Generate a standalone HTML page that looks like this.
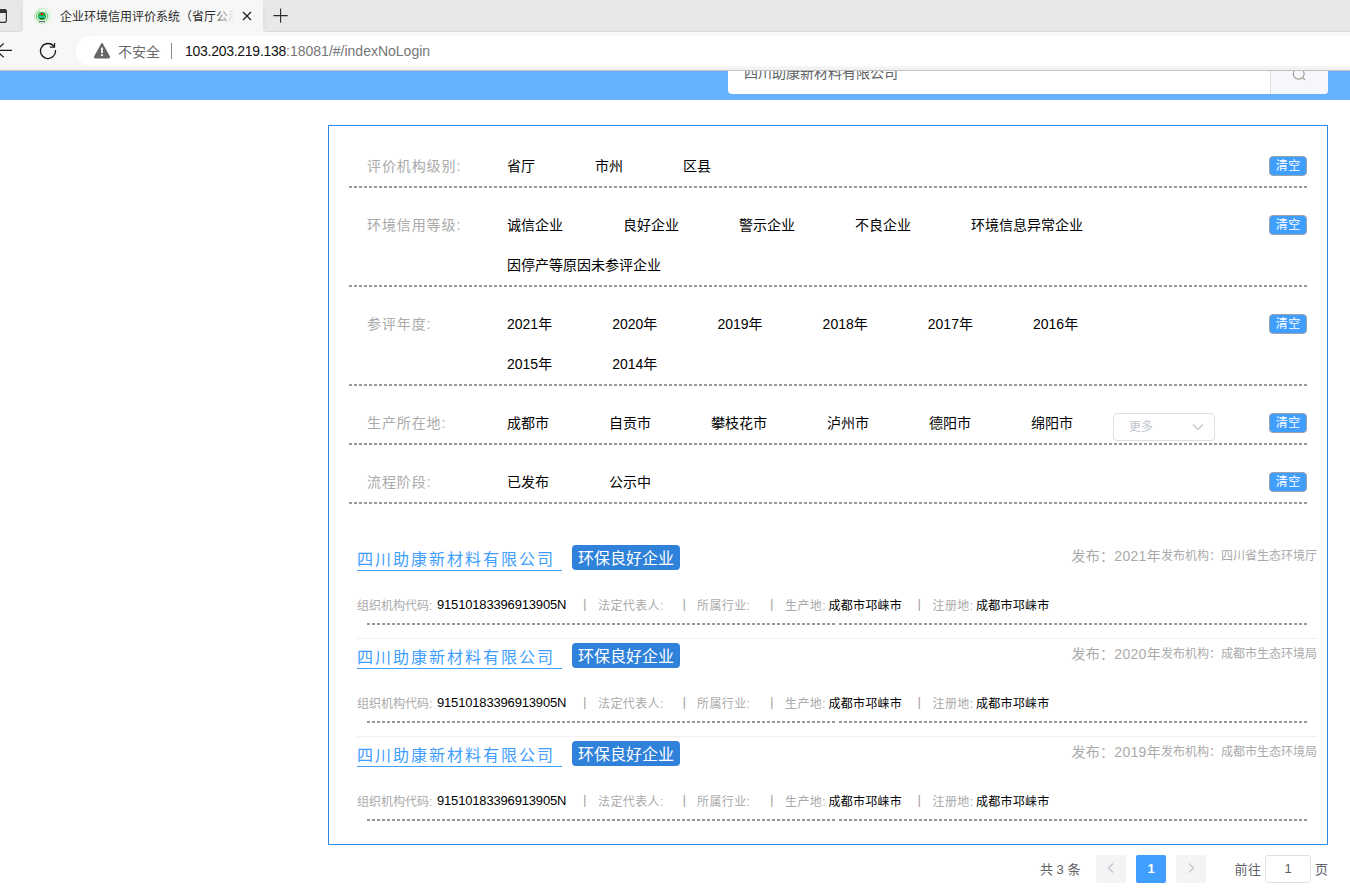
<!DOCTYPE html>
<html lang="zh-CN">
<head>
<meta charset="utf-8">
<title>企业环境信用评价系统（省厅公示）</title>
<style>
*{box-sizing:border-box;margin:0;padding:0}
html,body{width:1350px;height:895px;overflow:hidden;background:#fff}
body{position:relative;font-family:"Liberation Sans","Noto Sans CJK SC",sans-serif;font-size:14px;color:#000}
.abs{position:absolute;white-space:nowrap}
/* browser chrome */
#tabbar{left:0;top:0;width:1350px;height:32px;background:#e8e8e8}
#tab{left:22.8px;top:-3px;width:240.5px;height:36px;background:#f7f7f7;border-radius:6px 6px 0 0}
#tabbar{background:#f7f7f7}
#tabL{left:-5px;top:-5px;width:27.8px;height:36.6px;background:linear-gradient(90deg,#e8e8e8 0,#e8e8e8 80%,#e2e2e2 100%);border-radius:0 0 4px 0;border-bottom:1px solid #d9d9d9}
#tabR{left:263.3px;top:-5px;width:1100px;height:36.6px;background:linear-gradient(90deg,#e2e2e2 0,#e8e8e8 5px);border-radius:0 0 0 4px;border-bottom:1px solid #d9d9d9}
#tabTL{left:20px;top:0;width:8px;height:6px;background:#e8e8e8}
#tabTR{left:259px;top:0;width:8px;height:6px;background:#e8e8e8}
#toolbar{left:0;top:32px;width:1350px;height:38px;background:#f7f7f7}
#pill{left:76px;top:36px;width:1300px;height:30px;background:#fff;border-radius:15px}
#tbline{left:0;top:69.5px;width:1350px;height:1px;background:#c4c0bc}
#tbstrip{left:0;top:66px;width:1350px;height:4px;background:linear-gradient(180deg,#f7f7f7,#f0f0f0)}
.ui{font-family:"Liberation Sans","Noto Sans CJK SC",sans-serif}
/* page */
#bluebar{left:0;top:70px;width:1350px;height:29.5px;background:#66b1ff}
#search{left:728px;top:54px;width:600px;height:39.5px;background:#fff;border-radius:4px;overflow:hidden;font-size:14px;line-height:39px;color:#606266}
#sbtn{left:542px;top:0;width:58px;height:40px;background:#f5f7fa;border-left:1px solid #dcdfe6}
#panel{left:328px;top:125px;width:1000px;height:720px;border:1px solid #2e8ae6}
.lab{color:#aaa;font-size:14px;line-height:20px;left:367px;letter-spacing:.9px}
.opt{font-size:14px;line-height:20px;color:#000}
.dash{left:349px;width:958px;height:2px;background:repeating-linear-gradient(90deg,#999 0,#999 3px,transparent 3px,transparent 5px)}
.clr{left:1269px;width:38px;height:20px;background:#409eff;border:1px solid #9aa3ad;border-radius:4px;color:#fff;font-size:12px;line-height:19.5px;text-align:center;letter-spacing:.3px;padding-left:.3px}
/* results */
.name{left:357px;width:205px;height:26px;font-size:16px;letter-spacing:2px;color:#409eff;border-bottom:1px solid #409eff;line-height:30px}
.tag{left:572px;width:108px;height:25px;background:#2f81da;border-radius:4px;color:#fff;font-size:16px;line-height:28.6px;text-align:center;overflow:hidden}
.pub{right:33px;color:#aaa;font-size:14px;line-height:20px;text-align:right}
.pub{letter-spacing:.3px}
.pub small{font-size:12px;letter-spacing:0;position:relative;top:-1px}
.info{left:357px;height:18px;font-size:12px;line-height:18px;color:#aaa}
.info span{top:0}
.info .l{letter-spacing:.4px}
.info .v{color:#000;letter-spacing:.25px}
.info .n{color:#000;font-size:13px;letter-spacing:-.17px;top:-1px}
.info .l0{letter-spacing:0}
.info .s{color:#a5a5a5;font-size:13.6px;top:-2px;margin-left:-1.1px}
.dash2{left:367px;width:468px;height:2px;background:repeating-linear-gradient(90deg,#999 0,#999 3px,transparent 3px,transparent 5px)}
.dash2.r{left:839px;width:468px}
.sep{left:357px;width:960px;height:1px;background:#f0f0f0}
/* pagination */
.pg{top:855px;height:28px;line-height:28px;font-size:13px;color:#606266}
.pbtn{width:30px;background:#f4f4f5;border-radius:2px;text-align:center;color:#c0c4cc}
</style>
</head>
<body>
<!-- page header -->
<div id="bluebar" class="abs"></div>
<div id="search" class="abs"><span class="abs" style="left:16px;top:0">四川助康新材料有限公司</span><div id="sbtn" class="abs"><svg class="abs" style="left:21px;top:13px" width="16" height="16" viewBox="0 0 16 16"><circle cx="6.7" cy="6.7" r="5.4" fill="none" stroke="#a39a94" stroke-width="1.1"/><path d="M10.6 10.6 L13.2 13.2" stroke="#a39a94" stroke-width="1.1" fill="none"/></svg></div></div>

<!-- browser chrome -->
<div id="tabbar" class="abs"></div>
<div id="tabL" class="abs"></div>
<div id="tabR" class="abs"></div>
<div id="tabTL" class="abs"></div>
<div id="tabTR" class="abs"></div>
<div id="tab" class="abs"></div>
<div id="toolbar" class="abs"></div>
<div id="tbstrip" class="abs"></div>
<div id="pill" class="abs"></div>
<div id="tbline" class="abs"></div>
<div id="chrome">
<!-- tab left window icon -->
<svg class="abs" style="left:0;top:8px" width="8" height="16" viewBox="0 0 8 16"><path d="M-6 1.6 H4.2 a2.2 2.2 0 0 1 2.2 2.2 V12.2 a2.2 2.2 0 0 1 -2.2 2.2 H-6" fill="none" stroke="#333" stroke-width="1.2"/><path d="M-6 1 H4.2 a2.8 2.8 0 0 1 2.8 2.8 V5 H-6 Z" fill="#333"/></svg>
<!-- favicon -->
<svg class="abs" style="left:33px;top:7px" width="18" height="18" viewBox="0 0 18 18"><circle cx="9" cy="9" r="7.7" fill="#f1fbf1" stroke="#bfeabf" stroke-width=".9"/><circle cx="9" cy="9" r="5.7" fill="none" stroke="#46b955" stroke-width="1" stroke-dasharray="12.93 4.97" stroke-dashoffset="6.47" opacity=".85"/><circle cx="9" cy="9" r="4.1" fill="#25a838"/><rect x="8" y="6" width="2" height="2" fill="#f0121e"/><rect x="6" y="9.2" width="6" height="1.5" fill="#1fc8c4"/><rect x="6.6" y="11.2" width="4.8" height=".9" fill="#136b1e"/><rect x="6" y="14" width="6" height="1.2" fill="#6d6a78"/></svg>
<div class="abs ui" id="ttl" style="left:60px;top:7.5px;width:178px;height:18px;overflow:hidden;font-size:12px;line-height:18px;color:#2b2b2b">企业环境信用评价系统（省厅公示）</div>
<div class="abs" style="left:212px;top:6px;width:26px;height:20px;background:linear-gradient(90deg,rgba(247,247,247,0),#f7f7f7 88%)"></div>
<svg class="abs" style="left:242.3px;top:11.4px" width="10" height="10" viewBox="0 0 10 10"><path d="M1 1 L9 9 M9 1 L1 9" stroke="#222" stroke-width="1.3" fill="none"/></svg>
<svg class="abs" style="left:273px;top:8px" width="16" height="16" viewBox="0 0 16 16"><path d="M7.6 .4 V14.7 M.4 7.6 H14.7" stroke="#2a2a2a" stroke-width="1.1" fill="none"/></svg>
<!-- back arrow -->
<svg class="abs" style="left:0;top:42px" width="13" height="17" viewBox="0 0 13 17"><path d="M12 8.4 H-3 M3.7 1.4 L-3.75 8.4 L3.7 15.4" stroke="#1b1b1b" stroke-width="1.3" fill="none"/></svg>
<!-- reload -->
<svg class="abs" style="left:39px;top:42px" width="18" height="18" viewBox="0 0 18 18"><path d="M16.44 8.03 A7.5 7.5 0 1 1 15.07 4.6" stroke="#1b1b1b" stroke-width="1.3" fill="none"/><path d="M10.9 5.2 H15.5 V0.9" stroke="#1b1b1b" stroke-width="1.3" fill="none"/></svg>
<!-- warning -->
<svg class="abs" style="left:93px;top:42px" width="18" height="17" viewBox="0 0 18 17"><path d="M9 1.6 L16.2 14.7 a.8 .8 0 0 1 -.7 1.2 H2.5 a.8 .8 0 0 1 -.7 -1.2 Z" fill="#666" stroke="#666" stroke-width="1.4" stroke-linejoin="round"/><rect x="8.1" y="5.6" width="1.8" height="5.4" fill="#fff"/><rect x="8.1" y="12.2" width="1.8" height="1.9" fill="#fff"/></svg>
<div class="abs ui" style="left:118px;top:41.7px;font-size:14px;line-height:20px;color:#6a6a6a">不安全</div>
<div class="abs" style="left:171px;top:43px;width:1px;height:16px;background:#8a8a8a"></div>
<div class="abs ui" id="url" style="left:185px;top:41px;font-size:14px;line-height:20px;color:#767676;letter-spacing:0px"><span style="color:#111;letter-spacing:-.27px">103.203.219.138</span>:18081/#/indexNoLogin</div>
</div>

<!-- main panel -->
<div id="panel" class="abs"></div>
<div id="filters">
<div class="abs lab" style="top:156px">评价机构级别:</div>
<div class="abs opt" style="left:507px;top:156px">省厅</div>
<div class="abs opt" style="left:595px;top:156px">市州</div>
<div class="abs opt" style="left:683px;top:156px">区县</div>
<div class="abs clr" style="top:156px">清空</div>
<div class="abs dash" style="top:186px"></div>
<div class="abs lab" style="top:215px">环境信用等级:</div>
<div class="abs opt" style="left:507px;top:215px">诚信企业</div>
<div class="abs opt" style="left:623px;top:215px">良好企业</div>
<div class="abs opt" style="left:739px;top:215px">警示企业</div>
<div class="abs opt" style="left:855px;top:215px">不良企业</div>
<div class="abs opt" style="left:971px;top:215px">环境信息异常企业</div>
<div class="abs opt" style="left:507px;top:255px">因停产等原因未参评企业</div>
<div class="abs clr" style="top:215px">清空</div>
<div class="abs dash" style="top:285px"></div>
<div class="abs lab" style="top:314px">参评年度:</div>
<div class="abs opt" style="left:507.0px;top:314px">2021年</div>
<div class="abs opt" style="left:612.2px;top:314px">2020年</div>
<div class="abs opt" style="left:717.4px;top:314px">2019年</div>
<div class="abs opt" style="left:822.6px;top:314px">2018年</div>
<div class="abs opt" style="left:927.8px;top:314px">2017年</div>
<div class="abs opt" style="left:1033.0px;top:314px">2016年</div>
<div class="abs opt" style="left:507.0px;top:354px">2015年</div>
<div class="abs opt" style="left:612.2px;top:354px">2014年</div>
<div class="abs clr" style="top:314px">清空</div>
<div class="abs dash" style="top:384px"></div>
<div class="abs lab" style="top:413px">生产所在地:</div>
<div class="abs opt" style="left:507px;top:413px">成都市</div>
<div class="abs opt" style="left:609px;top:413px">自贡市</div>
<div class="abs opt" style="left:711px;top:413px">攀枝花市</div>
<div class="abs opt" style="left:827px;top:413px">泸州市</div>
<div class="abs opt" style="left:929px;top:413px">德阳市</div>
<div class="abs opt" style="left:1031px;top:413px">绵阳市</div>
<div class="abs" id="more" style="left:1113px;top:413px;width:102px;height:28px;border:1px solid #dcdfe6;border-radius:4px;background:#fff"><span class="abs" style="left:15px;top:0;line-height:26px;font-size:12px;color:#c0c4cc">更多</span><svg class="abs" style="left:77.5px;top:8px" width="12" height="10" viewBox="0 0 12 10"><path d="M1 2.5 L6 7.5 L11 2.5" fill="none" stroke="#c0c4cc" stroke-width="1.1"/></svg></div>
<div class="abs clr" style="top:413px">清空</div>
<div class="abs dash" style="top:443px"></div>
<div class="abs lab" style="top:472px">流程阶段:</div>
<div class="abs opt" style="left:507px;top:472px">已发布</div>
<div class="abs opt" style="left:609px;top:472px">公示中</div>
<div class="abs clr" style="top:472px">清空</div>
<div class="abs dash" style="top:502px"></div>
</div>
<div id="results">
<div class="abs name" style="top:545px">四川助康新材料有限公司</div>
<div class="abs tag" style="top:545px">环保良好企业</div>
<div class="abs pub" style="top:546px">发布：2021年<small>发布机构：四川省生态环境厅</small></div>
<div class="abs info" style="top:597px"><span class="abs l l0" style="left:0px">组织机构代码:</span><span class="abs n" style="left:80px">91510183396913905N</span><span class="abs s" style="left:227px">|</span><span class="abs l" style="left:241px">法定代表人:</span><span class="abs s" style="left:326.5px">|</span><span class="abs l" style="left:340px">所属行业:</span><span class="abs s" style="left:414px">|</span><span class="abs l" style="left:428px">生产地:</span><span class="abs v" style="left:471.5px">成都市邛崃市</span><span class="abs s" style="left:561.5px">|</span><span class="abs l" style="left:575.5px">注册地:</span><span class="abs v" style="left:619px">成都市邛崃市</span></div>
<div class="abs dash2" style="top:623px"></div>
<div class="abs dash2 r" style="top:623px"></div>
<div class="abs sep" style="top:638px"></div>
<div class="abs name" style="top:643px">四川助康新材料有限公司</div>
<div class="abs tag" style="top:643px">环保良好企业</div>
<div class="abs pub" style="top:644px">发布：2020年<small>发布机构：成都市生态环境局</small></div>
<div class="abs info" style="top:695px"><span class="abs l l0" style="left:0px">组织机构代码:</span><span class="abs n" style="left:80px">91510183396913905N</span><span class="abs s" style="left:227px">|</span><span class="abs l" style="left:241px">法定代表人:</span><span class="abs s" style="left:326.5px">|</span><span class="abs l" style="left:340px">所属行业:</span><span class="abs s" style="left:414px">|</span><span class="abs l" style="left:428px">生产地:</span><span class="abs v" style="left:471.5px">成都市邛崃市</span><span class="abs s" style="left:561.5px">|</span><span class="abs l" style="left:575.5px">注册地:</span><span class="abs v" style="left:619px">成都市邛崃市</span></div>
<div class="abs dash2" style="top:721px"></div>
<div class="abs dash2 r" style="top:721px"></div>
<div class="abs sep" style="top:736px"></div>
<div class="abs name" style="top:741px">四川助康新材料有限公司</div>
<div class="abs tag" style="top:741px">环保良好企业</div>
<div class="abs pub" style="top:742px">发布：2019年<small>发布机构：成都市生态环境局</small></div>
<div class="abs info" style="top:793px"><span class="abs l l0" style="left:0px">组织机构代码:</span><span class="abs n" style="left:80px">91510183396913905N</span><span class="abs s" style="left:227px">|</span><span class="abs l" style="left:241px">法定代表人:</span><span class="abs s" style="left:326.5px">|</span><span class="abs l" style="left:340px">所属行业:</span><span class="abs s" style="left:414px">|</span><span class="abs l" style="left:428px">生产地:</span><span class="abs v" style="left:471.5px">成都市邛崃市</span><span class="abs s" style="left:561.5px">|</span><span class="abs l" style="left:575.5px">注册地:</span><span class="abs v" style="left:619px">成都市邛崃市</span></div>
<div class="abs dash2" style="top:819px"></div>
<div class="abs dash2 r" style="top:819px"></div>
</div>
<div id="pager">
<div class="abs pg" style="left:1040px;line-height:29.5px">共 3 条</div>
<div class="abs pg pbtn" style="left:1096px"><svg width="8" height="12" viewBox="0 0 8 12" style="vertical-align:-1px"><path d="M6 1.5 L1.5 6 L6 10.5" fill="none" stroke="#c0c4cc" stroke-width="1.2"/></svg></div>
<div class="abs pg pbtn" style="left:1136px;background:#409eff;color:#fff;font-weight:bold">1</div>
<div class="abs pg pbtn" style="left:1176px"><svg width="8" height="12" viewBox="0 0 8 12" style="vertical-align:-1px"><path d="M2 1.5 L6.5 6 L2 10.5" fill="none" stroke="#c0c4cc" stroke-width="1.2"/></svg></div>
<div class="abs pg" style="left:1234.5px;line-height:29.5px;letter-spacing:.4px">前往</div>
<div class="abs pg" style="left:1265px;width:46px;border:1px solid #dcdfe6;border-radius:3px;text-align:center;line-height:26px">1</div>
<div class="abs pg" style="left:1315px;line-height:29.5px">页</div>
</div>
</body>
</html>
